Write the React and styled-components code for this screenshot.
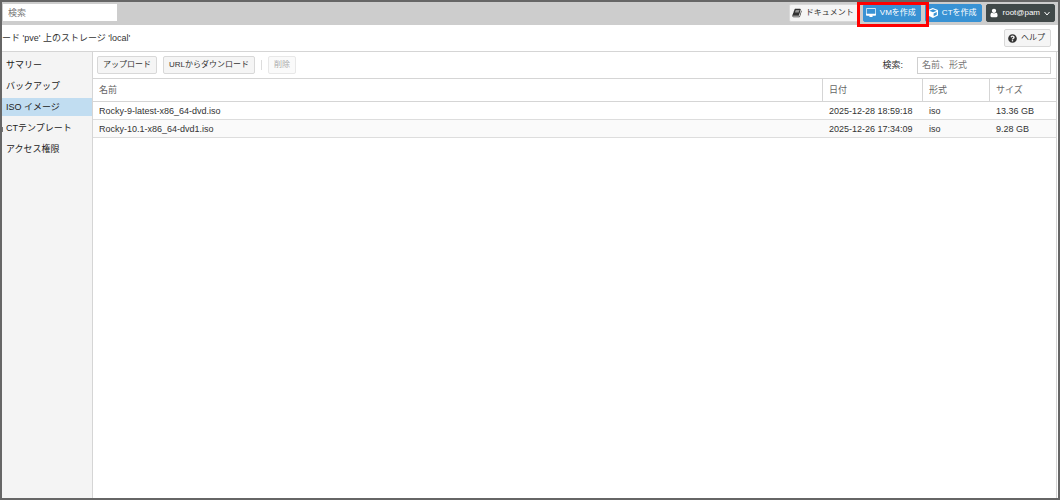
import React from 'react'
import styled, { createGlobalStyle, css } from 'styled-components'
import { FaCube, FaQuestionCircle } from 'react-icons/fa'

const menu = [
  { id: 'summary', label: 'サマリー' },
  { id: 'backup', label: 'バックアップ' },
  { id: 'iso', label: 'ISO イメージ', active: true },
  { id: 'template', label: 'CTテンプレート', icon: true },
  { id: 'permissions', label: 'アクセス権限' }
]

const images = [
  { name: 'Rocky-9-latest-x86_64-dvd.iso', date: '2025-12-28 18:59:18', format: 'iso', size: '13.36 GB' },
  { name: 'Rocky-10.1-x86_64-dvd1.iso', date: '2025-12-26 17:34:09', format: 'iso', size: '9.28 GB' }
]

const BookIcon = () => (
  <svg width='10' height='10' viewBox='0 0 1792 1792' fill='currentColor' aria-hidden='true'>
    <path d='M1703 478q40 57 18 129l-275 906q-19 64-76.500 107.500t-122.500 43.500h-923q-77 0-148.500-53.500t-99.500-131.500q-24-67-2-127 0-4 3-27t4-37q1-8-3-21.500t-3-19.500q2-11 8-21t16.500-23.500 16.500-23.500q23-38 45-91.500t30-91.500q3-10 .5-30t-.5-28q3-11 17-28t17-23q21-36 42-92t25-90q1-9-2.500-32t.5-28q4-13 22-30.500t22-22.500q19-26 42.500-84.500t27.500-96.500q1-8-3-25.500t-2-26.500q2-8 9-18t18-23 17-21q8-12 16.500-30.500t15-35 16-36 19.500-32 26.500-23.500 36-11.500 47.500 5.500l-1 3q38-9 51-9h761q74 0 114 56t18 130l-274 906q-36 119-71.500 153.500t-128.500 34.500h-869q-27 0-38 15-11 16-1 43 24 70 144 70h923q29 0 56-15.500t35-41.500l300-987q7-22 5-57 38 15 59 43zm-1064 2q-4 13 2 22.500t20 9.500h608q13 0 25.500-9.500t16.500-22.500l21-64q4-13-2-22.500t-20-9.500h-608q-13 0-25.500 9.500t-16.500 22.500zm-83 256q-4 13 2 22.500t20 9.500h608q13 0 25.500-9.500t16.500-22.500l21-64q4-13-2-22.500t-20-9.500h-608q-13 0-25.500 9.500t-16.500 22.500z' />
  </svg>
)

const DesktopIcon = () => (
  <svg width='10' height='10' viewBox='0 0 1920 1792' fill='currentColor' aria-hidden='true'>
    <path d='M1792 992v-832q0-13-9.500-22.500t-22.500-9.500h-1600q-13 0-22.500 9.500t-9.500 22.500v832q0 13 9.500 22.500t22.500 9.500h1600q13 0 22.500-9.500t9.500-22.500zm128-832v1088q0 66-47 113t-113 47h-544q0 37 16 77.500t32 71 16 43.500q0 26-19 45t-45 19h-512q-26 0-45-19t-19-45q0-14 16-44t32-70 16-78h-544q-66 0-113-47t-47-113v-1088q0-66 47-113t113-47h1600q66 0 113 47t47 113z' />
  </svg>
)

const UserIcon = () => (
  <svg width='10' height='10' viewBox='0 0 1792 1792' fill='currentColor' aria-hidden='true'>
    <path d='M1536 1399q0 109-62.500 187t-150.500 78h-854q-88 0-150.500-78t-62.500-187q0-85 8.500-160.500t31.500-152 58.500-131 94-89 134.500-34.500q131 128 313 128t313-128q76 0 134.500 34.500t94 89 58.500 131 31.500 152 8.500 160.500zm-256-887q0 159-112.500 271.500t-271.500 112.500-271.500-112.500-112.500-271.500 112.500-271.500 271.500-112.500 271.500 112.500 112.500 271.500z' />
  </svg>
)

const ChevronIcon = () => (
  <svg width='6' height='6' viewBox='0 0 6 6' fill='none' stroke='currentColor' aria-hidden='true'>
    <path d='M.5 2 3 5 5.500 2' />
  </svg>
)

const TemplateIcon = () => (
  <svg width='2' height='8' viewBox='0 0 2 8' fill='#777' aria-hidden='true'>
    <path d='M0 3h1v5H0z' />
  </svg>
)

const App = () => (
  <Frame>
    <GlobalStyle />
    <TopBar>
      <TopSearch type='search' placeholder='検索' aria-label='検索' />
      <Actions>
        <Button $size='tight'><BookIcon />ドキュメント</Button>
        <Highlight>
          <Button $size='tight' $kind='primary'><DesktopIcon />VMを作成</Button>
        </Highlight>
        <Button $size='tight' $kind='primary'><FaCube size={10} />CTを作成</Button>
        <Button $size='tight' $kind='dark'><UserIcon />root@pam<ChevronIcon /></Button>
      </Actions>
    </TopBar>
    <TitleBar>
      <Title>ード 'pve' 上のストレージ 'local'</Title>
      <Button $size='icon'><FaQuestionCircle size={9} />ヘルプ</Button>
    </TitleBar>
    <Body>
      <Sidebar>
        {menu.map(item => (
          <MenuItem key={item.id} href={`#${item.id}`} $active={item.active}>
            <IconSlot>{item.icon && <TemplateIcon />}</IconSlot>
            {item.label}
          </MenuItem>
        ))}
      </Sidebar>
      <Content>
        <Toolbar>
          <Button>アップロード</Button>
          <Button>URLからダウンロード</Button>
          <Separator />
          <Button disabled>削除</Button>
          <FilterLabel htmlFor='filter'>検索:</FilterLabel>
          <FilterInput id='filter' type='text' placeholder='名前、形式' />
        </Toolbar>
        <Table>
          <colgroup>
            <col />
            <Col $width={100} />
            <Col $width={67} />
            <Col $width={66} />
          </colgroup>
          <thead>
            <tr>
              <HeadCell>名前</HeadCell>
              <HeadCell>日付</HeadCell>
              <HeadCell>形式</HeadCell>
              <HeadCell>サイズ</HeadCell>
            </tr>
          </thead>
          <tbody>
            {images.map(image => (
              <Row key={image.name}>
                <Cell>{image.name}</Cell>
                <Cell>{image.date}</Cell>
                <Cell>{image.format}</Cell>
                <Cell>{image.size}</Cell>
              </Row>
            ))}
          </tbody>
        </Table>
      </Content>
    </Body>
  </Frame>
)

export default App

const GlobalStyle = createGlobalStyle`
  * {
    box-sizing: border-box;
  }
  body {
    margin: 0;
  }
  body, button, input {
    font-family: "Liberation Sans", "Noto Sans CJK JP", sans-serif;
    font-size: 9px;
    line-height: 14px;
    color: #333;
  }
`

const Frame = styled.div`
  display: flex;
  flex-direction: column;
  min-height: 100vh;
  border: 2px solid #666;
  background: #fff;
`

const TopBar = styled.header`
  display: flex;
  align-items: flex-start;
  justify-content: space-between;
  height: 23px;
  padding: 2px 3px 0 1px;
  background: #cdcdcd;
`

const inputStyle = css`
  height: 17px;
  padding: 0 4px;
  border: 1px solid #cfcfcf;
  border-radius: 0;
  background: #fff;
  outline: none;
  &::placeholder {
    color: #777;
    opacity: 1;
  }
`

const TopSearch = styled.input`
  ${inputStyle}
  width: 114px;
  border-color: #fff;
`

const Actions = styled.div`
  display: flex;
  gap: 4px;
`

const kinds = {
  plain: css`
    color: #333;
    background: #f5f5f5;
    border-color: #d8d8d8;
  `,
  primary: css`
    color: #fff;
    background: #3892d4;
    border-color: #3892d4;
  `,
  dark: css`
    color: #fff;
    background: #404848;
    border-color: #404848;
  `
}

const paddings = {
  normal: '0 5px',
  icon: '0 5px 0 3px',
  tight: '0 4px 0 2px'
}

const Button = styled.button`
  display: flex;
  align-items: center;
  gap: 4px;
  height: 18px;
  padding: ${props => paddings[props.$size || 'normal']};
  border: 1px solid;
  border-radius: 2px;
  font-size: 8px;
  white-space: nowrap;
  ${props => kinds[props.$kind || 'plain']}
  &:disabled {
    color: #aaa;
    background: #fafafa;
    border-color: #e8e8e8;
  }
`

const Highlight = styled.div`
  position: relative;
  &:after {
    content: "";
    position: absolute;
    z-index: 1;
    top: -2px;
    bottom: -5px;
    left: -6px;
    right: -8px;
    border: 3px solid #f00;
    pointer-events: none;
  }
`

const TitleBar = styled.div`
  display: flex;
  align-items: center;
  justify-content: space-between;
  height: 27px;
  padding-right: 7px;
  border-bottom: 1px solid #d5d5d5;
`

const Title = styled.h1`
  margin: 0;
  font-size: 9px;
  font-weight: normal;
`

const Body = styled.div`
  display: flex;
  flex: 1;
`

const Sidebar = styled.nav`
  flex: none;
  width: 91px;
  padding-top: 4px;
  border-right: 1px solid #d5d5d5;
  background: #f4f4f4;
`

const MenuItem = styled.a`
  display: flex;
  align-items: center;
  height: 18px;
  margin-bottom: 3px;
  color: #222;
  text-decoration: none;
  white-space: nowrap;
  background: ${props => props.$active ? '#c1ddf1' : 'transparent'};
`

const IconSlot = styled.span`
  display: flex;
  width: 4px;
`

const Content = styled.main`
  flex: 1;
  min-width: 0;
  margin-right: 1px;
  border-right: 1px solid #d5d5d5;
`

const Toolbar = styled.div`
  display: flex;
  align-items: center;
  gap: 6px;
  height: 27px;
  padding: 0 5px 0 4px;
  border-bottom: 1px solid #d5d5d5;
`

const Separator = styled.span`
  width: 1px;
  height: 10px;
  background: #ddd;
`

const FilterLabel = styled.label`
  margin-left: auto;
  margin-right: 8px;
`

const FilterInput = styled.input`
  ${inputStyle}
  width: 134px;
`

const Table = styled.table`
  width: 100%;
  table-layout: fixed;
  border-collapse: separate;
  border-spacing: 0;
`

const Col = styled.col`
  width: ${props => props.$width}px;
`

const HeadCell = styled.th`
  height: 23px;
  padding: 0 6px;
  text-align: left;
  font-weight: normal;
  color: #666;
  border-bottom: 1px solid #d5d5d5;
  &:not(:last-child) {
    border-right: 1px solid #d5d5d5;
  }
`

const Cell = styled.td`
  height: 18px;
  padding: 1px 6px 0;
  border-bottom: 1px solid #ddd;
`

const Row = styled.tr`
  &:nth-child(even) {
    background: #fafafa;
  }
`
